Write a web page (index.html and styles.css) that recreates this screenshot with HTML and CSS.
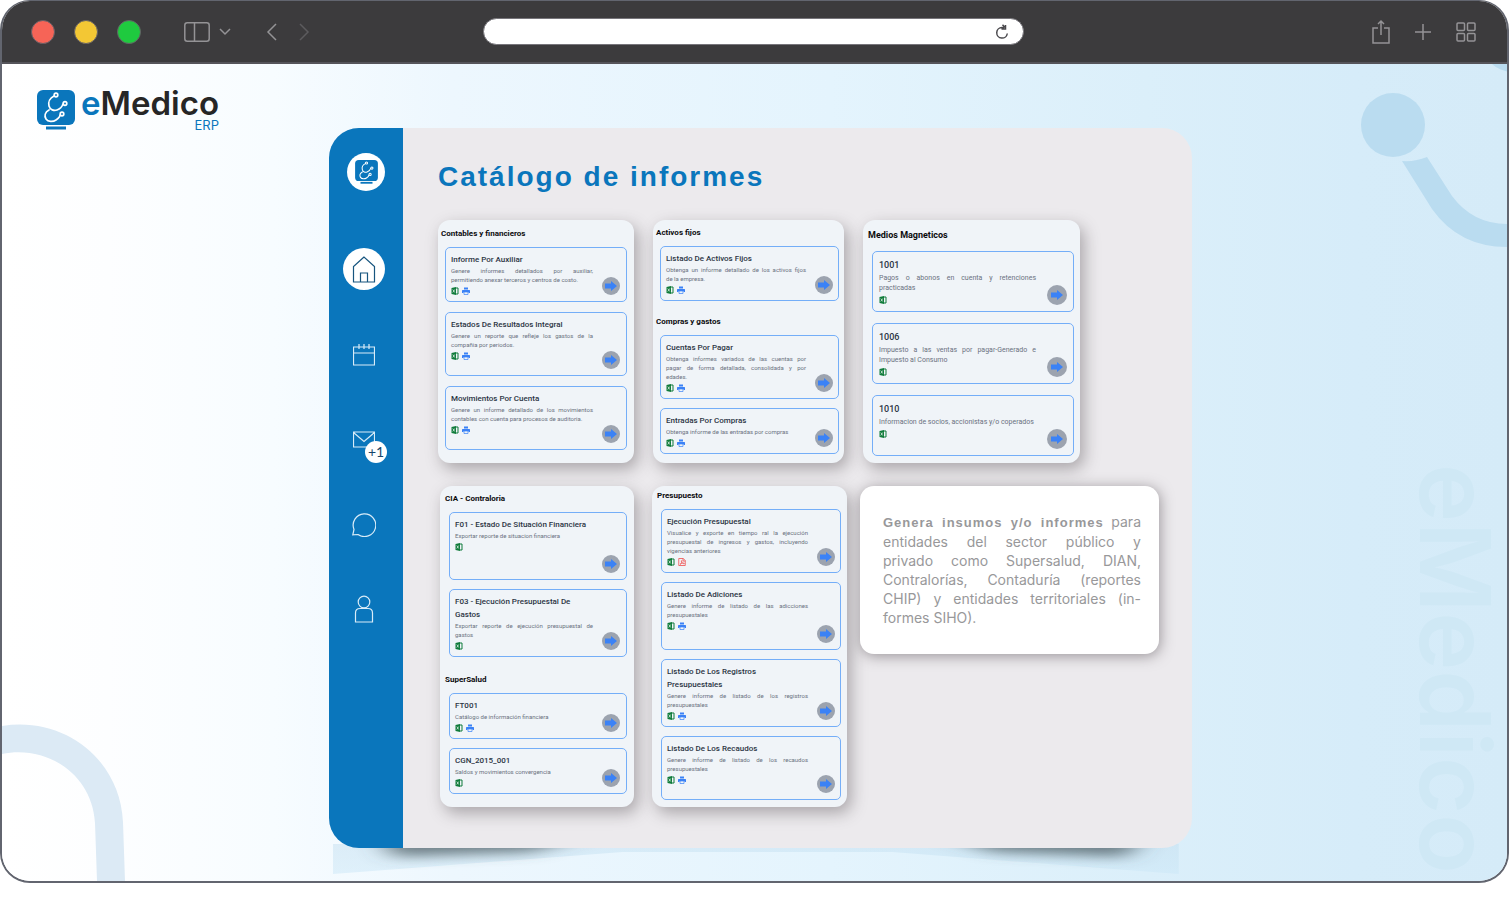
FILE: index.html
```html
<!DOCTYPE html>
<html lang="es">
<head>
<meta charset="utf-8">
<meta name="viewport" content="width=device-width, initial-scale=1">
<title>eMedico ERP - Catálogo de informes</title>
<link rel="stylesheet" href="styles.css">
</head>
<body>
<svg class="sprite" aria-hidden="true">
  <symbol id="excel" viewBox="0 0 14 16"><path fill="#0f7b3a" d="M0 2 9 0v16L0 14z"/><path fill="none" stroke="#0f7b3a" stroke-width="2" d="M9 2h4v12H9"/><path stroke="#fff" stroke-width="1.3" d="m2.5 5 4 6m0-6-4 6"/></symbol>
  <symbol id="print" viewBox="0 0 16 16"><path fill="#3b82f6" d="M4 1h8v4H4zM1 6h14l1 1v5h-3v-2H3v2H0V7z"/><path fill="none" stroke="#3b82f6" stroke-width="1.4" d="M4 10h8v5H4z"/></symbol>
  <symbol id="pdf" viewBox="0 0 16 16"><path fill="none" stroke="#ef4444" stroke-width="1.5" d="M1.500 1h9l4 4v10h-13zM10 1v5h4.500"/><path fill="none" stroke="#ef4444" stroke-width="1.300" d="M4 13c3-2 4-5 3.500-7.500-.5-1-1.500 0-.5 2S10 11.500 12 11.500s0-2-3-1.200S5 12 4 13z"/></symbol>
  <symbol id="arrow" viewBox="0 0 12 10"><path fill="#3b82f6" d="M0 2.500h6V0l6 5-6 5V7.500H0z"/></symbol>
  <symbol id="brand" viewBox="0 0 38 40">
    <rect width="38" height="35" rx="6" fill="#0a76bc"/><rect x="9" y="36.500" width="20" height="3" fill="#0a76bc"/>
    <g fill="none" stroke="#fff" stroke-width="1.700" stroke-linecap="round"><path d="M17 6c-4 2-6 6-5 10s5 5 8 4 5-3 6-6M12 20c-4 2-5 6-3 9s7 3 10 1 4-3 4-5"/><circle cx="19" cy="5" r="1.800"/><circle cx="28" cy="13.500" r="1.800"/><circle cx="25" cy="24" r="1.800"/></g>
  </symbol>
</svg>

<div class="window">
  <header class="toolbar">
    <div class="tools">
      <div class="lights">
        <button class="light red" aria-label="Cerrar"></button>
        <button class="light yellow" aria-label="Minimizar"></button>
        <button class="light green" aria-label="Maximizar"></button>
      </div>
      <button class="tool panes" aria-label="Barra lateral"><svg width="46" height="20" viewBox="0 0 46 20"><rect x=".8" y=".8" width="24.400" height="18.400" rx="2.500"/><path d="M10.500 1v18M36 7l5 5 5-5"/></svg></button>
      <button class="tool" aria-label="Atrás"><svg width="10" height="18" viewBox="0 0 10 18"><path d="M9 1 1 9l8 8"/></svg></button>
      <button class="tool dim" aria-label="Adelante"><svg width="10" height="18" viewBox="0 0 10 18"><path d="m1 1 8 8-8 8"/></svg></button>
    </div>
    <form class="address">
      <input type="text" aria-label="Dirección">
      <button class="reload" type="button" aria-label="Recargar"><svg width="14" height="16" viewBox="0 0 14 16"><path d="M9 3.500H7a5.300 5.300 0 1 0 5.300 6M6.500 5H10.500V1M7.500.8l3 3.200"/></svg></button>
    </form>
    <div class="tools end">
      <button class="tool" aria-label="Compartir"><svg width="18" height="24" viewBox="0 0 18 24"><path d="M6 8H1v15h16V8h-5M9 15V1M6 4l3-3 3 3"/></svg></button>
      <button class="tool" aria-label="Nueva pestaña"><svg width="16" height="16" viewBox="0 0 16 16"><path d="M8 0v16M0 8h16"/></svg></button>
      <button class="tool" aria-label="Pestañas"><svg width="20" height="20" viewBox="0 0 20 20"><rect x="1" y="1" width="7.500" height="7.500" rx="1"/><rect x="11.500" y="1" width="7.500" height="7.500" rx="1"/><rect x="1" y="11.500" width="7.500" height="7.500" rx="1"/><rect x="11.500" y="11.500" width="7.500" height="7.500" rx="1"/></svg></button>
    </div>
  </header>

  <div class="page">
    <svg class="decor decor-right" width="150" height="190" viewBox="0 0 150 190" aria-hidden="true"><circle cx="36" cy="61" r="32"/><circle cx="156" cy="-24" r="32"/><path d="M45 97q13 1 25-4l25 39q21 28 55 28v23q-48 0-75-38z"/></svg>
    <svg class="decor decor-left" width="126" height="160" viewBox="0 0 126 160" aria-hidden="true"><path d="M0 5C62-5 118 38 121 101l2 59H95l-2-58C90 52 44 24 0 33z"/></svg>
    <div class="watermark" aria-hidden="true">eMedico</div>

    <a class="logo" href="#" aria-label="eMedico ERP">
      <svg width="38" height="40"><use href="#brand"/></svg>
      <span class="logo-text"><span class="logo-name"><span class="blue">e</span>Medico</span><span class="logo-sub">ERP</span></span>
    </a>

    <div class="stage">
      <div class="panel">
        <aside class="sidebar">
          <a class="bubble small" href="#" aria-label="eMedico"><svg width="23" height="24"><use href="#brand"/></svg></a>
          <nav class="nav">
            <a class="nav-link bubble" href="#" aria-label="Inicio"><svg width="24" height="27" viewBox="0 0 24 27"><path d="M12 1 1.500 10.500V26h21V10.500zM8.500 26v-9h7v9"/></svg></a>
            <a class="nav-link" href="#" aria-label="Calendario"><svg width="22" height="23" viewBox="0 0 22 23"><path d="M.5 4h21v18H.5zM.5 10h21M6 1v5M11 1v5M16 1v5"/></svg></a>
            <a class="nav-link" href="#" aria-label="Correo"><svg width="22" height="17" viewBox="0 0 22 17"><path d="M.5 1h21v15H.5zM.5 1.500 11 10.500l10.500-9"/></svg><span class="badge">+1</span></a>
            <a class="nav-link" href="#" aria-label="Mensajes"><svg width="24" height="25" viewBox="0 0 24 25"><path d="M6 22.500A11.300 11.300 0 1 0 2 17.500L.8 22.800z"/></svg></a>
            <a class="nav-link" href="#" aria-label="Perfil"><svg width="20" height="28" viewBox="0 0 20 28"><circle cx="10" cy="7" r="5.800"/><path d="M1.500 27V18q0-4.500 4.500-4.500h8q4.500 0 4.500 4.500v9z"/></svg></a>
          </nav>
        </aside>

        <main class="content">
          <h1>Catálogo de informes</h1>

          <div class="row">
            <section class="card contables">
              <h2>Contables y financieros</h2>
              <div class="list">
                <article class="item"><div class="copy"><h3>Informe Por Auxiliar</h3><p><span class="line">Genere informes detallados por auxiliar,</span> permitiendo anexar terceros y centros de costo.</p><div class="files"><svg><use href="#excel"/></svg><svg><use href="#print"/></svg></div></div><button class="go" aria-label="Abrir Informe Por Auxiliar"><svg><use href="#arrow"/></svg></button></article>
                <article class="item h64"><div class="copy"><h3>Estados De Resultados Integral</h3><p>Genere un reporte que refleje los gastos de la compañia por periodos.</p><div class="files"><svg><use href="#excel"/></svg><svg><use href="#print"/></svg></div></div><button class="go" aria-label="Abrir Estados De Resultados Integral"><svg><use href="#arrow"/></svg></button></article>
                <article class="item h64"><div class="copy"><h3>Movimientos Por Cuenta</h3><p>Genere un informe detallado de los movimientos contables con cuenta para procesos de auditoria.</p><div class="files"><svg><use href="#excel"/></svg><svg><use href="#print"/></svg></div></div><button class="go" aria-label="Abrir Movimientos Por Cuenta"><svg><use href="#arrow"/></svg></button></article>
              </div>
            </section>

            <section class="card activos">
              <h2>Activos fijos</h2>
              <div class="list">
                <article class="item"><div class="copy"><h3>Listado De Activos Fijos</h3><p><span class="line">Obtenga un informe detallado de los activos fijos</span> de la empresa.</p><div class="files"><svg><use href="#excel"/></svg><svg><use href="#print"/></svg></div></div><button class="go" aria-label="Abrir Listado De Activos Fijos"><svg><use href="#arrow"/></svg></button></article>
              </div>
              <h2>Compras y gastos</h2>
              <div class="list">
                <article class="item"><div class="copy"><h3>Cuentas Por Pagar</h3><p><span class="line">Obtenga informes variados de las cuentas por</span> <span class="line">pagar de forma detallada, consolidada y por</span> edades.</p><div class="files"><svg><use href="#excel"/></svg><svg><use href="#print"/></svg></div></div><button class="go" aria-label="Abrir Cuentas Por Pagar"><svg><use href="#arrow"/></svg></button></article>
                <article class="item"><div class="copy"><h3>Entradas Por Compras</h3><p>Obtenga informe de las entradas por compras</p><div class="files"><svg><use href="#excel"/></svg><svg><use href="#print"/></svg></div></div><button class="go" aria-label="Abrir Entradas Por Compras"><svg><use href="#arrow"/></svg></button></article>
              </div>
            </section>

            <section class="card medios">
              <h2>Medios Magneticos</h2>
              <div class="list">
                <article class="item"><div class="copy"><h3>1001</h3><p>Pagos o abonos en cuenta y retenciones practicadas</p><div class="files"><svg><use href="#excel"/></svg></div></div><button class="go" aria-label="Abrir 1001"><svg><use href="#arrow"/></svg></button></article>
                <article class="item"><div class="copy"><h3>1006</h3><p>Impuesto a las ventas por pagar-Generado e Impuesto al Consumo</p><div class="files"><svg><use href="#excel"/></svg></div></div><button class="go" aria-label="Abrir 1006"><svg><use href="#arrow"/></svg></button></article>
                <article class="item"><div class="copy"><h3>1010</h3><p>Informacion de socios, accionistas y/o coperados</p><div class="files"><svg><use href="#excel"/></svg></div></div><button class="go" aria-label="Abrir 1010"><svg><use href="#arrow"/></svg></button></article>
              </div>
            </section>
          </div>

          <div class="row second">
            <section class="card cia">
              <h2>CIA - Contraloria</h2>
              <div class="list">
                <article class="item h68"><div class="copy"><h3>F01 - Estado De Situación Financiera</h3><p>Exportar reporte de situacion financiera</p><div class="files"><svg><use href="#excel"/></svg></div></div><button class="go" aria-label="Abrir F01"><svg><use href="#arrow"/></svg></button></article>
                <article class="item"><div class="copy"><h3>F03 - Ejecución Presupuestal De Gastos</h3><p>Exportar reporte de ejecución presupuestal de gastos</p><div class="files"><svg><use href="#excel"/></svg></div></div><button class="go" aria-label="Abrir F03"><svg><use href="#arrow"/></svg></button></article>
              </div>
              <h2>SuperSalud</h2>
              <div class="list">
                <article class="item"><div class="copy"><h3>FT001</h3><p>Catálogo de información financiera</p><div class="files"><svg><use href="#excel"/></svg><svg><use href="#print"/></svg></div></div><button class="go" aria-label="Abrir FT001"><svg><use href="#arrow"/></svg></button></article>
                <article class="item"><div class="copy"><h3>CGN_2015_001</h3><p>Saldos y movimientos convergencia</p><div class="files"><svg><use href="#excel"/></svg></div></div><button class="go" aria-label="Abrir CGN_2015_001"><svg><use href="#arrow"/></svg></button></article>
              </div>
            </section>

            <section class="card presupuesto">
              <h2>Presupuesto</h2>
              <div class="list">
                <article class="item"><div class="copy"><h3>Ejecución Presupuestal</h3><p>Visualice y exporte en tiempo ral la ejecución presupuestal de ingresos y gastos, incluyendo vigencias anteriores</p><div class="files"><svg><use href="#excel"/></svg><svg><use href="#pdf"/></svg></div></div><button class="go" aria-label="Abrir Ejecución Presupuestal"><svg><use href="#arrow"/></svg></button></article>
                <article class="item h68"><div class="copy"><h3>Listado De Adiciones</h3><p>Genere informe de listado de las adicciones presupuestales</p><div class="files"><svg><use href="#excel"/></svg><svg><use href="#print"/></svg></div></div><button class="go" aria-label="Abrir Listado De Adiciones"><svg><use href="#arrow"/></svg></button></article>
                <article class="item"><div class="copy"><h3>Listado De Los Registros Presupuestales</h3><p>Genere informe de listado de los registros presupuestales</p><div class="files"><svg><use href="#excel"/></svg><svg><use href="#print"/></svg></div></div><button class="go" aria-label="Abrir Listado De Los Registros Presupuestales"><svg><use href="#arrow"/></svg></button></article>
                <article class="item h64"><div class="copy"><h3>Listado De Los Recaudos</h3><p>Genere informe de listado de los recaudos presupuestales</p><div class="files"><svg><use href="#excel"/></svg><svg><use href="#print"/></svg></div></div><button class="go" aria-label="Abrir Listado De Los Recaudos"><svg><use href="#arrow"/></svg></button></article>
              </div>
            </section>

            <p class="info"><span class="line"><strong>Genera insumos y/o informes</strong> para</span> <span class="line">entidades del sector público y</span> <span class="line">privado como Supersalud, DIAN,</span> <span class="line">Contralorías, Contaduría (reportes</span> <span class="line">CHIP) y entidades territoriales (in-</span>formes SIHO).</p>
          </div>
        </main>
      </div>
      <svg class="floor" viewBox="0 0 847 26" preserveAspectRatio="none" aria-hidden="true">
        <defs>
          <filter id="soft" filterUnits="userSpaceOnUse" x="-40" y="-60" width="930" height="120"><feGaussianBlur stdDeviation="14 6"/></filter>
          <linearGradient id="mist" x1="0" y1="0" x2="0" y2="1"><stop offset="0" stop-color="#c4dff0" stop-opacity=".5"/><stop offset="1" stop-color="#cbe7f7" stop-opacity=".5"/></linearGradient>
        </defs>
        <path fill="url(#mist)" d="M0-4h847v30L560 4H290L0 26z"/>
        <path filter="url(#soft)" fill="#4c5d64" fill-opacity=".75" d="M40-24H290L200 4 60 9zM580-24H820L795 9 660 4z"/>
      </svg>
    </div>
  </div>
</div>
</body>
</html>
```
FILE: styles.css
```css
* { box-sizing: border-box; }
body { margin: 0; background: #fff; font-family: Roboto, "Liberation Sans", sans-serif; }
h1, h2, h3, p { margin: 0; }
button { border: 0; padding: 0; background: none; }
svg { display: block; }
.sprite { position: absolute; width: 0; height: 0; }

.window {
  display: flex;
  flex-direction: column;
  margin-right: 3px;
  border: 2px solid #62656f;
  border-top-width: 1px;
  border-radius: 30px;
  overflow: hidden;
}

/* Browser toolbar */
.toolbar {
  display: grid;
  grid-template-columns: 1fr minmax(200px, 541px) 1fr;
  align-items: center;
  height: 63px;
  padding: 0 31px 0 29px;
  background: #3c3b3d;
  border-bottom: 2px solid #55545a;
}
.tools { display: flex; align-items: center; }
.tools.end { justify-content: flex-end; gap: 25px; }
.lights { display: flex; gap: 19px; }
.light { width: 24px; height: 24px; border-radius: 50%; border: 1px solid #646067; }
.red { background: #f66457; }
.yellow { background: #f3c734; }
.green { background: #1fca3f; }
.tool svg { fill: none; stroke: #949396; stroke-width: 1.5; overflow: visible; }
.tool { margin: 0; }
.tools:not(.end) .tool { margin-left: 22px; }
.tools:not(.end) .panes { margin: 0 15px 0 43px; }
.tool.dim svg { stroke: #5c5b5e; }
.address {
  display: flex;
  align-items: center;
  height: 27px;
  padding-right: 14px;
  border: 1px solid #77757b;
  border-radius: 14px;
  background: #fff;
}
.address input { flex: 1; min-width: 0; border: 0; background: none; outline: 0; padding: 0 14px; }
.reload svg { fill: none; stroke: #4a494d; stroke-width: 1.5; }

/* Page */
.page {
  position: relative;
  display: grid;
  grid-template-columns: minmax(230px, 327fr) minmax(0, 863px) 315fr;
  align-items: start;
  overflow: hidden;
  padding-bottom: 7px;
  background: linear-gradient(90deg, #fff 0, #fdfeff 7%, #f7fcff 18%, #edf7fe 30%, #e4f4fd 55%, #dbeffa 76%, #d6ecf9 90%, #d5ebf8 100%);
}
.decor { position: absolute; }
.decor-right { top: 0; right: 0; fill: #badcf0; }
.decor-left { bottom: 0; left: 0; fill: #dceaf5; }
.watermark {
  position: absolute;
  right: 0;
  bottom: 7px;
  writing-mode: vertical-rl;
  font: 600 98px/104px Inter, sans-serif;
  color: #cfe8f5;
}
.logo { display: flex; gap: 6px; padding: 24px 0 0 35px; text-decoration: none; }
.logo svg { margin-top: 2px; }
.logo-text { display: flex; flex-direction: column; align-items: flex-end; font-family: Inter, sans-serif; }
.logo-name { font-size: 33px; line-height: 31px; font-weight: 600; color: #262626; }
.logo-sub { font-size: 13px; line-height: 13px; color: #0a76bc; }
.blue { color: #0a76bc; }

.stage { padding-top: 64px; }
.panel {
  position: relative;
  z-index: 1;
  display: flex;
  border-radius: 30px;
  overflow: hidden;
  background: #eceaed;
}
.floor { width: 98%; height: 26px; margin-left: 4px; overflow: visible; }

/* Sidebar */
.sidebar {
  display: flex;
  flex-direction: column;
  align-items: center;
  flex: 0 0 74px;
  gap: 57px;
  padding: 25px 4px 0 0;
  background: #0a76bc;
}
.bubble { display: grid; place-items: center; border-radius: 50%; background: #fff; }
.small { width: 38px; height: 38px; margin-left: 4px; }
.nav { display: flex; flex-direction: column; gap: 43px; }
.nav-link { position: relative; display: grid; place-items: center; width: 42px; height: 42px; }
.nav-link svg { fill: none; stroke: #d9ecf8; stroke-width: 1.2; }
.nav-link.bubble svg { stroke: #17557f; }
.badge {
  position: absolute;
  left: 22px;
  top: 23px;
  width: 22px;
  height: 22px;
  border-radius: 50%;
  background: #fff;
  color: #17456b;
  font: 14px/22px Lato, sans-serif;
  text-align: center;
}

/* Content */
.content { flex: 1; min-width: 0; padding: 32px 20px 41px 35px; }
h1 {
  margin-bottom: 26px;
  font: bold 28px/34px "Liberation Sans", Arial, sans-serif;
  letter-spacing: 2px;
  color: #0a76bc;
}
.row { display: flex; gap: 19px; }
.second { margin-top: 23px; padding-left: 2px; gap: 18px; }
.card {
  border-radius: 12px;
  background: #f0f4f8;
  box-shadow: 4px 6px 16px rgba(70, 62, 68, .4);
}
.contables { flex: 0 1 196px; padding: 7px 7px 12px 3px; }
.activos { flex: 0 1 191px; padding: 6px 5px 9px 3px; }
.medios { flex: 0 1 217px; padding: 9px 6px 7px 5px; }
.cia { flex: 0 1 194px; padding: 6px 7px 12px 5px; }
.presupuesto { flex: 0 1 195px; padding: 3px 6px 7px 5px; }
h2 { margin-bottom: 7px; font-size: 8px; line-height: 13px; font-weight: 700; color: #0b0b0d; }
.medios h2 { margin-bottom: 9px; font-size: 9px; }
.list { display: flex; flex-direction: column; gap: 9px; padding-left: 4px; }
.contables .list { gap: 10px; }
.medios .list { gap: 11px; }
.list + h2 { margin-top: 14px; }
.cia .list + h2 { margin-top: 16px; }
.item {
  display: flex;
  gap: 9px;
  padding: 5px 5px 6px;
  border: 1px solid #74aef8;
  border-radius: 5px;
}
.contables .item, .cia .item { padding-right: 6px; }
.h64 { min-height: 64px; }
.h68 { min-height: 68px; }
.medios .item { min-height: 61px; gap: 11px; padding: 6px; }
.copy { flex: 1; min-width: 0; }
h3 { font-size: 8px; line-height: 13px; font-weight: 500; color: #2b3444; }
.medios h3 { font-size: 9px; line-height: 15px; }
.item p { font-size: 6px; line-height: 9px; color: #6b7280; text-align: justify; }
.medios .item p { font-size: 7px; line-height: 10px; }
.line { display: block; text-align-last: justify; }
.files { display: flex; gap: 3px; margin-top: 3px; }
.files svg { width: 8px; height: 8px; }
.go {
  display: grid;
  place-items: center;
  align-self: flex-end;
  flex: 0 0 18px;
  height: 18px;
  border-radius: 50%;
  background: #9ca3af;
}
.go svg { width: 12px; height: 10px; }
.medios .go { flex-basis: 20px; height: 20px; }

.info {
  flex: 0 1 299px;
  align-self: flex-start;
  margin-left: -5px;
  padding: 26px 18px 27px 23px;
  border-radius: 14px;
  background: #fff;
  box-shadow: 1px 2px 14px rgba(70, 62, 68, .5);
  font: 14px/19px Inter, sans-serif;
  color: #98989a;
}
.info strong { font: bold 13px/19px "Liberation Sans", Arial, sans-serif; letter-spacing: 1px; }
```
